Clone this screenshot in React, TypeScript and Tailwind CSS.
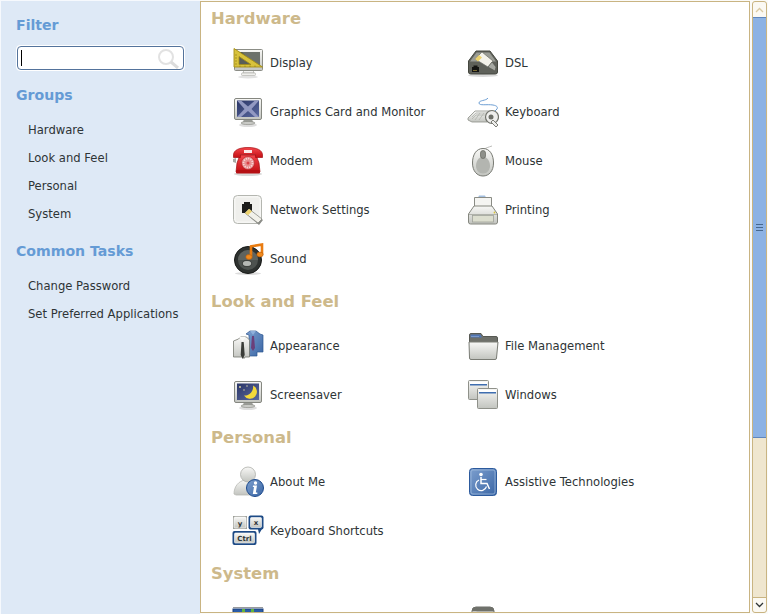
import type { ReactNode } from "react"

function Ico({ children }: { children: ReactNode }) {
  return (
    <svg width={32} height={32} viewBox="0 0 32 32" className="shrink-0">
      {children}
    </svg>
  )
}

// shared gradients, referenced by the icons below
function Defs() {
  return (
    <svg width={0} height={0} className="block h-0 w-0">
      <defs>
        <linearGradient id="silver" x1="0" y1="0" x2="0" y2="1">
          <stop offset="0" stopColor="#f8f8f6" />
          <stop offset="1" stopColor="#c2c4bf" />
        </linearGradient>
        <linearGradient id="red" x1="0" y1="0" x2="0" y2="1">
          <stop offset="0" stopColor="#f4474c" />
          <stop offset="1" stopColor="#c40f14" />
        </linearGradient>
        <linearGradient id="blue" x1="0" y1="0" x2="1" y2="1">
          <stop offset="0" stopColor="#7d9fce" />
          <stop offset="1" stopColor="#3a66a5" />
        </linearGradient>
        <linearGradient id="night" x1="0" y1="0" x2="1" y2="1">
          <stop offset="0" stopColor="#2a3566" />
          <stop offset="1" stopColor="#5b6aa0" />
        </linearGradient>
      </defs>
    </svg>
  )
}

const Monitor = ({ children }: { children: ReactNode }) => (
  <>
    <ellipse cx="16" cy="29" rx="9" ry="2" fill="#dedede" />
    <path d="M12 23h8l1 3H11z" fill="#9a9c97" />
    <ellipse cx="16" cy="27" rx="7" ry="1.6" fill="#c9cac6" stroke="#85877f" strokeWidth="0.6" />
    <rect x="2.5" y="2.5" width="27" height="21" rx="1.5" fill="url(#silver)" stroke="#858780" />
    {children}
  </>
)

const DisplayIcon = () => (
  <Ico>
    <ellipse cx="16" cy="30" rx="10" ry="1.5" fill="#e2e2e2" />
    <path d="M12 23h9l1 3H11z" fill="#f3f3f1" stroke="#a9aaa5" strokeWidth="0.7" />
    <rect x="9.5" y="26" width="14" height="2.5" rx="0.8" fill="#efefec" stroke="#a9aaa5" strokeWidth="0.6" />
    <rect x="2.5" y="2.5" width="28" height="21" rx="1" fill="url(#silver)" stroke="#8b8d86" />
    <rect x="5" y="5" width="23" height="15" fill="#4f544f" />
    <path d="M10 5h18v15H24z" fill="#6c716b" />
    <path d="M2 1.5L30.5 20H2z" fill="#d8c23c" stroke="#a38d16" strokeWidth="0.9" strokeLinejoin="round" />
    <path d="M7 9.5L19 17.5H7z" fill="#5a5e58" stroke="#a38d16" strokeWidth="0.8" />
    <path d="M3 17h2M3 14h2M3 11h2M3 8h2M8 20v-1.5M13 20v-1.5M18 20v-1.5M23 20v-1.5" stroke="#8c7712" strokeWidth="0.6" />
  </Ico>
)

const GraphicsIcon = () => (
  <Ico>
    <Monitor>
      <rect x="5" y="4.5" width="22" height="16.5" fill="url(#night)" />
      <path d="M5 4.5h4l7 6 7-6h4L19.5 13 27 21h-4l-7-6-7 6H5l7.5-8z" fill="#9299c2" />
    </Monitor>
  </Ico>
)

const ModemIcon = () => (
  <Ico>
    <ellipse cx="16" cy="29" rx="14" ry="2" fill="#d8d8d8" />
    <path d="M1 14l3-1v5l-3-1z" fill="#a8aaa5" />
    <path d="M8 10h16l3 8 1 9H4l1-9z" fill="url(#red)" stroke="#a40d11" strokeWidth="0.7" />
    <rect x="4" y="25" width="24" height="3.5" rx="1" fill="#b50f13" />
    <path d="M1.5 10c0-5 6-7.5 14.5-7.5S30.5 5 30.5 10v2.5h-7V9.5h-15v3H1.5z" fill="url(#red)" stroke="#a40d11" strokeWidth="0.7" />
    <rect x="12" y="5" width="8" height="3" fill="#fbe9e9" />
    <circle cx="16" cy="18" r="6.5" fill="#e98f90" stroke="#b02024" strokeWidth="0.6" />
    <circle cx="16" cy="18" r="4.5" fill="none" stroke="#f5d5d5" strokeWidth="1.7" strokeDasharray="1.3 1" />
    <circle cx="16" cy="18" r="1.5" fill="#d94045" />
  </Ico>
)

const NetworkIcon = () => (
  <Ico>
    <rect x="1.5" y="1.5" width="28" height="28" rx="4" fill="#f6f6f4" stroke="#b4b6b0" />
    <rect x="3.5" y="3.5" width="24" height="24" rx="2.5" fill="#efefec" />
    <path d="M10 10h2V8h6v2h2v9H10z" fill="#1d1d1b" />
    <path d="M13 19l4-4 14 11-4 5z" fill="#8b8d88" />
    <path d="M13 19l4-4 13 10-4 4z" fill="#f2f1ea" stroke="#777972" strokeWidth="0.6" />
    <path d="M13 19l4-4 3 2.3-4 4z" fill="#ecd26d" />
  </Ico>
)

const SoundIcon = () => (
  <Ico>
    <ellipse cx="16" cy="30.5" rx="13" ry="1.5" fill="#dcdcdc" />
    <circle cx="16" cy="17" r="13.5" fill="#2e3230" stroke="#171917" />
    <circle cx="16" cy="17" r="10" fill="#4d524f" />
    <path d="M6 17a10 10 0 0 1 20 0z" fill="#6a6f6b" opacity="0.6" />
    <ellipse cx="15" cy="20.5" rx="4.5" ry="3" fill="#b5b8b4" stroke="#202220" strokeWidth="0.7" />
    <path d="M18 3.5L30 1.5v10" fill="none" stroke="#e97c11" strokeWidth="2.6" />
    <path d="M19 3v10.5" stroke="#e97c11" strokeWidth="2.6" />
    <ellipse cx="17" cy="14" rx="3.2" ry="2.4" fill="#f08a1d" stroke="#b85b06" strokeWidth="0.6" />
    <ellipse cx="28" cy="11.5" rx="3.2" ry="2.4" fill="#f08a1d" stroke="#b85b06" strokeWidth="0.6" />
  </Ico>
)

const DslIcon = () => (
  <Ico>
    <ellipse cx="16" cy="28.5" rx="15" ry="1.5" fill="#dadada" />
    <path d="M1.5 14L9 4h14l7.5 10v11a2 2 0 0 1-2 2h-25a2 2 0 0 1-2-2z" fill="#5f615a" stroke="#45473f" />
    <path d="M3 14.5L9.5 5.5h13L29 14.5z" fill="#9a9c95" />
    <path d="M8 12l7-7 11 9-5 6z" fill="#f3f2ea" stroke="#6a6c65" strokeWidth="0.7" />
    <path d="M8 12l4-4 3 2.5-4 4z" fill="#edd36f" />
    <path d="M21 20l4-5 4 5-1 4z" fill="#a7a9a3" stroke="#50524c" strokeWidth="0.6" />
    <path d="M5 25v-5h1.5v-1.5h4V20H12v5z" fill="#141412" />
    <path d="M6.5 23.5h1M8.5 23.5h1" stroke="#e0c050" strokeWidth="1.2" />
  </Ico>
)

const KeyboardIcon = () => (
  <Ico>
    <path d="M21 2c-2 3-9 2-9 5s8 1 14 2c4 .8 5 2 4 4l-3 3" fill="none" stroke="#6e9fd4" strokeWidth="1" />
    <path d="M1 22l7-7h16v6l-4 5H5l-4-2z" fill="url(#silver)" stroke="#8d8f88" strokeWidth="0.8" />
    <path d="M5 21l4-4h12M5 23l4-4h11M13 17l-5 7M17 17l-5 7" fill="none" stroke="#abada6" strokeWidth="0.7" />
    <circle cx="25" cy="21" r="6.5" fill="#eeeeec" stroke="#70726b" strokeWidth="1.2" />
    <circle cx="24" cy="21" r="2.5" fill="#6d6f68" />
    <path d="M26 24l5 5-2 2-5-5z" fill="#eeeeec" stroke="#70726b" strokeWidth="0.9" />
  </Ico>
)

const MouseIcon = () => (
  <Ico>
    <path d="M16 5c2-2 6-3 9-4" fill="none" stroke="#b5b6b2" strokeWidth="0.9" />
    <path d="M16 3.5C9 3.5 5.5 10 5.5 18c0 8 4.5 13 10.5 13s10.5-5 10.5-13c0-8-3.5-14.5-10.5-14.5z" fill="url(#silver)" stroke="#777972" />
    <path d="M16 12c-5 0-7 5-7 9 0 4 3 7.5 7 7.5s7-3.5 7-7.5c0-4-2-9-7-9z" fill="#b3b5b0" />
    <rect x="13.5" y="5.5" width="5" height="8" rx="2.5" fill="#8e908a" stroke="#65675f" strokeWidth="0.7" />
  </Ico>
)

const PrinterIcon = () => (
  <Ico>
    <path d="M12 1.5h6l1 2h-8z" fill="#a4bfdf" />
    <path d="M7.5 3.5h17v12h-17z" fill="#f5f5f2" stroke="#8a8c85" />
    <path d="M7 12h18l5.5 8v8a2 2 0 0 1-2 2h-25a2 2 0 0 1-2-2v-8z" fill="url(#silver)" stroke="#85877f" />
    <path d="M2 20.5h28" stroke="#b0b2ab" />
    <rect x="5.5" y="21.5" width="21" height="6.5" fill="#dcdecf" stroke="#a0a299" strokeWidth="0.8" />
    <circle cx="27.5" cy="18.5" r="0.9" fill="#d9c43a" />
  </Ico>
)

const AppearanceIcon = () => (
  <Ico>
    <path d="M14 4l4-3h6l4 3 3 1v17h-6v4h-8V5z" fill="url(#blue)" stroke="#2d568f" strokeWidth="0.7" />
    <path d="M18 1h6l-3 4z" fill="#8fb0db" />
    <path d="M20 6h2l1 12-2 3-2-3z" fill="#6b3f7a" />
    <path d="M1.5 11l5-2 2-2h6l2 2 1 1v17H13l-1 1.5L11 27H1.5z" fill="url(#silver)" stroke="#75776f" strokeWidth="0.8" />
    <path d="M7 7h7l-3.5 4z" fill="#fafaf8" />
    <path d="M9.5 12h2.2l1 13-2 4-2-4z" fill="#3a3c38" />
  </Ico>
)

const FolderIcon = () => (
  <Ico>
    <path d="M2.5 5A1.5 1.5 0 0 1 4 3.5h10l2 3h13a1.5 1.5 0 0 1 1.5 1.5v6h-28z" fill="#6e706a" stroke="#575953" />
    <path d="M3.5 4.5h10l1.5 3H3.5z" fill="#4f75b4" />
    <path d="M4.5 6.5h8" stroke="#a4bde0" strokeDasharray="1 1" />
    <path d="M2 12h29l-1.500 16a1.500 1.500 0 0 1-1.500 1.500H4A1.500 1.500 0 0 1 2.500 28z" fill="url(#silver)" stroke="#7a7c75" />
  </Ico>
)

const ScreensaverIcon = () => (
  <Ico>
    <Monitor>
      <rect x="5" y="4.5" width="22" height="16.5" fill="url(#night)" />
      <path d="M21 6.5a7 7 0 1 1-9 10 8.5 8.5 0 0 0 9-10z" fill="#f4d93a" />
      <circle cx="8" cy="8" r="0.9" fill="#e8e2a8" />
      <circle cx="12" cy="11" r="0.7" fill="#e8e2a8" />
      <circle cx="15" cy="7" r="0.7" fill="#e8e2a8" />
    </Monitor>
  </Ico>
)

const Win = ({ x, y, w, h }: { x: number; y: number; w: number; h: number }) => (
  <g>
    <rect x={x + 0.5} y={y + 0.5} width={w} height={h} rx="1" fill="url(#silver)" stroke="#8f918a" />
    <rect x={x + 2} y={y + 2} width={w - 3} height="2" fill="#ffffff" />
    <rect x={x + 2} y={y + 4} width={w - 3} height="1.5" fill="#3f6eb0" />
  </g>
)

const WindowsIcon = () => (
  <Ico>
    <Win x={1} y={1} w={20} h={19} />
    <Win x={10} y={9} w={20} h={20} />
  </Ico>
)

const AboutIcon = () => (
  <Ico>
    <path d="M2 28c0-8 5-13 11-14h5c5 1 8 5 8 9v6H4z" fill="url(#silver)" stroke="#b8b9b4" strokeWidth="0.8" />
    <circle cx="16" cy="8.5" r="7.5" fill="url(#silver)" stroke="#adafa9" strokeWidth="0.8" />
    <circle cx="23" cy="22" r="8.5" fill="url(#blue)" stroke="#1d4a8d" />
    <circle cx="23.5" cy="17" r="1.7" fill="#fff" />
    <path d="M21 19.5h4l-1.2 7h1.5V28h-4.500l1.200-7h-1.200z" fill="#fff" />
  </Ico>
)

const AssistiveIcon = () => (
  <Ico>
    <rect x="2.5" y="2.5" width="27" height="27" rx="3" fill="url(#blue)" stroke="#2c5a9d" />
    <rect x="4" y="4" width="24" height="24" rx="2" fill="none" stroke="#a4bfdf" strokeWidth="0.7" />
    <circle cx="14" cy="8.5" r="1.8" fill="#fff" />
    <path d="M14 11v6.5h6l2.5 5.5" fill="none" stroke="#fff" strokeWidth="1.5" />
    <path d="M14 13.5h5.5" stroke="#fff" strokeWidth="1.2" />
    <path d="M12 14a5.5 5.5 0 1 0 7.5 6.5" fill="none" stroke="#fff" strokeWidth="1.2" />
  </Ico>
)

const Key = ({ x, y, w, h, t }: { x: number; y: number; w: number; h: number; t: string }) => (
  <g>
    <rect x={x} y={y} width={w} height={h} rx="1" fill="url(#silver)" stroke="#fff" strokeWidth="0.6" />
    <text x={x + w / 2} y={y + h - 2.5} textAnchor="middle" fontSize="7" fontWeight="700" fontFamily="'DejaVu Sans', sans-serif" fill="#2e3436">
      {t}
    </text>
  </g>
)

const ShortcutsIcon = () => (
  <Ico>
    <rect x="1" y="1" width="14" height="13" fill="#9d9f98" />
    <Key x={2} y={2} w={12} h={11} t="y" />
    <rect x="16.5" y="0.5" width="15" height="14" rx="2" fill="#1d4a85" />
    <Key x={18.5} y={2.5} w={11} h={10} t="x" />
    <path d="M26 14h4l-3 5z" fill="#1d4a85" />
    <rect x="0.5" y="16" width="24" height="14" rx="2" fill="#1d4a85" />
    <Key x={2.5} y={18} w={20} h={10} t="Ctrl" />
  </Ico>
)

const ChipIcon = () => (
  <Ico>
    <path d="M1.5 5.5h29" stroke="#30343a" strokeDasharray="1 1" />
    <rect x="1" y="7" width="30" height="24" fill="#2a5ca8" stroke="#1b3e78" />
    <rect x="10" y="7" width="3" height="3" fill="#62b53d" />
    <rect x="19" y="7" width="3" height="3" fill="#62b53d" />
  </Ico>
)

const DrawerIcon = () => (
  <Ico>
    <path d="M5 9a4 4 0 0 1 4-4h14a4 4 0 0 1 4 4v20H5z" fill="#f4f4f1" stroke="#6b6d66" />
    <path d="M5 9a4 4 0 0 1 4-4h14a4 4 0 0 1 4 4v.5H5z" fill="#6f716b" />
    <rect x="5.5" y="9.5" width="4" height="20" fill="#d8d9d5" />
  </Ico>
)

type Item = { label: string; icon: ReactNode }

const SECTIONS: { title: string; items: Item[] }[] = [
  {
    title: "Hardware",
    items: [
      { label: "Display", icon: <DisplayIcon /> },
      { label: "DSL", icon: <DslIcon /> },
      { label: "Graphics Card and Monitor", icon: <GraphicsIcon /> },
      { label: "Keyboard", icon: <KeyboardIcon /> },
      { label: "Modem", icon: <ModemIcon /> },
      { label: "Mouse", icon: <MouseIcon /> },
      { label: "Network Settings", icon: <NetworkIcon /> },
      { label: "Printing", icon: <PrinterIcon /> },
      { label: "Sound", icon: <SoundIcon /> },
    ],
  },
  {
    title: "Look and Feel",
    items: [
      { label: "Appearance", icon: <AppearanceIcon /> },
      { label: "File Management", icon: <FolderIcon /> },
      { label: "Screensaver", icon: <ScreensaverIcon /> },
      { label: "Windows", icon: <WindowsIcon /> },
    ],
  },
  {
    title: "Personal",
    items: [
      { label: "About Me", icon: <AboutIcon /> },
      { label: "Assistive Technologies", icon: <AssistiveIcon /> },
      { label: "Keyboard Shortcuts", icon: <ShortcutsIcon /> },
    ],
  },
  {
    title: "System",
    items: [
      { label: "", icon: <ChipIcon /> },
      { label: "", icon: <DrawerIcon /> },
    ],
  },
]

function SideHeading({ children }: { children: ReactNode }) {
  return <h2 className="h-[28px] pl-[15px] text-[14.1px] font-bold leading-[28px] text-[#659bd5]">{children}</h2>
}

function SideLink({ children }: { children: ReactNode }) {
  return <div className="h-[28px] pl-[27px] text-[11.6px] leading-[28px] text-[#2e3436]">{children}</div>
}

export default function App() {
  return (
    <div className="flex h-[614px] w-[768px] overflow-hidden bg-[#fbfbf9] font-['DejaVu_Sans',sans-serif]">
      <Defs />
      {/* Sidebar */}
      <aside className="w-[200px] shrink-0 border-l border-t border-[#f6f9fd] bg-[#dee9f6] pt-[10px]">
        <SideHeading>Filter</SideHeading>
        <div className="ml-[15px] mt-[6px] flex h-[26px] w-[169px] items-center rounded-[4px] border border-white bg-white">
          <div className="flex h-[24px] w-full items-center justify-between rounded-[4px] border border-[#53739c] pl-[3px] pr-[3px]">
            <div className="h-[16px] w-px bg-black" />
            <svg width={24} height={22} viewBox="0 0 24 22">
              <circle cx="10" cy="10" r="7" fill="none" stroke="#e2e2e2" strokeWidth="2" />
              <path d="M15 15l7 6" stroke="#dcdcdc" strokeWidth="3" />
            </svg>
          </div>
        </div>
        <div className="mt-[10px]">
          <SideHeading>Groups</SideHeading>
        </div>
        <div className="mt-[7px]">
          <SideLink>Hardware</SideLink>
          <SideLink>Look and Feel</SideLink>
          <SideLink>Personal</SideLink>
          <SideLink>System</SideLink>
        </div>
        <div className="mt-[9px]">
          <SideHeading>Common Tasks</SideHeading>
        </div>
        <div className="mt-[7px]">
          <SideLink>Change Password</SideLink>
          <SideLink>Set Preferred Applications</SideLink>
        </div>
      </aside>

      {/* Main panel */}
      <main className="my-px w-[550px] shrink-0 overflow-hidden border border-[#c9b482] bg-white">
        <div className="-mt-[2px]">
          {SECTIONS.map(s => (
            <section key={s.title}>
              <h2 className="h-[38px] pl-[10px] text-[16.4px] font-bold leading-[38px] text-[#cdb98b]">{s.title}</h2>
              <div className="grid grid-cols-[235px_1fr] pl-[31px]">
                {s.items.map((it, i) => (
                  <div key={i} className="flex h-[49px] items-center gap-[6px] text-[11.6px] text-[#2e3436]">
                    {it.icon}
                    <span className="pt-[2px]">{it.label}</span>
                  </div>
                ))}
              </div>
            </section>
          ))}
        </div>
      </main>

      {/* Scrollbar */}
      <div className="my-px ml-[2px] flex w-[15px] shrink-0 flex-col rounded-[3px] border border-[#c9b482] bg-[#efe6cf]">
        <div className="flex h-[15px] items-center justify-center rounded-t-[3px] bg-[#fbf9f3]">
          <svg width={9} height={6} viewBox="0 0 9 6">
            <path d="M1 5l3.5-3.5L8 5" fill="none" stroke="#d9c9a2" strokeWidth="1.3" />
          </svg>
        </div>
        <div className="flex h-[421px] items-center justify-center border-y border-[#5f86bd] bg-[#8cb2e4]">
          <div className="flex flex-col gap-[2px]">
            <div className="h-px w-[7px] bg-[#46688f]" />
            <div className="h-px w-[7px] bg-[#46688f]" />
            <div className="h-px w-[7px] bg-[#46688f]" />
          </div>
        </div>
        <div className="flex-1" />
        <div className="flex h-[15px] items-center justify-center rounded-b-[3px] border-t border-[#c9b482] bg-[#fbf9f3]">
          <svg width={9} height={6} viewBox="0 0 9 6">
            <path d="M1 1l3.5 3.5L8 1" fill="none" stroke="#2e3436" strokeWidth="1.3" />
          </svg>
        </div>
      </div>
    </div>
  )
}
